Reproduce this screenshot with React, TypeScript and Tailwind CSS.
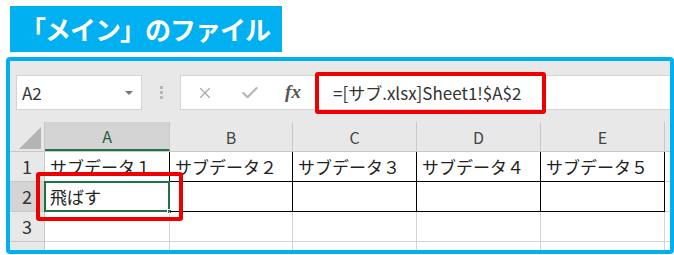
import { X, Check } from 'lucide-react'

const cols = ['A', 'B', 'C', 'D', 'E']
const widths = ['w-[125px]', 'w-[123px]', 'w-[124px]', 'w-[124px]', 'w-[124px]']
const jp = "font-['Noto_Sans_CJK_JP',sans-serif]"

export default function App() {
  return (
    <div className={`relative w-[674px] h-[255px] bg-white overflow-hidden ${jp}`}>
      {/* Title */}
      <div className="ml-[10px] mt-[6px] w-[272px] h-[46px] bg-[#00b0f0] flex items-center pl-[10px]">
        <span className="text-white text-[26px] font-bold leading-none tracking-[-1px]">「メイン」のファイル</span>
      </div>

      {/* Excel frame */}
      <div className="ml-[6px] mt-[5px] w-[668px] h-[197px] border-4 border-[#00b0f0] rounded-[4px] overflow-hidden bg-[#e8e8e8]">
        {/* Formula bar */}
        <div className="h-[61px] flex items-start pt-[14px] pl-[6px]">
          <div className="w-[126px] h-[35px] bg-white border border-[#d4d4d4] flex items-center justify-between pl-[5px] pr-[8px]">
            <span className="text-[17px] text-[#333]">A2</span>
            <span className="w-0 h-0 border-l-[4px] border-r-[4px] border-t-[4px] border-l-transparent border-r-transparent border-t-[#777]" />
          </div>
          <div className="w-[38px] h-[35px] flex flex-col items-center justify-center gap-[2px]">
            <span className="w-[3px] h-[3px] bg-[#b8b8b8]" />
            <span className="w-[3px] h-[3px] bg-[#b8b8b8]" />
            <span className="w-[3px] h-[3px] bg-[#b8b8b8]" />
          </div>
          <div className="flex-1 h-[35px] bg-white border border-r-0 border-[#d4d4d4] flex items-center">
            <div className="w-[46px] flex justify-center ml-[1px]">
              <X size={18} strokeWidth={1.5} color="#a6a6a6" />
            </div>
            <div className="w-[44px] flex justify-center">
              <Check size={20} strokeWidth={2.5} color="#b4b4b4" />
            </div>
            <div className="w-[42px] flex justify-center">
              <span className="font-['Liberation_Serif',serif] italic font-bold text-[19px] text-[#555]">fx</span>
            </div>
            <span className="ml-[19px] text-[17px] text-[#333]">=[サブ.xlsx]Sheet1!$A$2</span>
          </div>
        </div>

        {/* Column headers */}
        <div className="flex h-[30px] border-b border-[#c8c8c8]">
          <div className="w-[35px] h-full border-r border-[#c8c8c8] flex items-end justify-end pr-[3px] pb-[2px]">
            <span className="w-0 h-0 border-l-[22px] border-l-transparent border-b-[22px] border-b-[#b4b4b4]" />
          </div>
          {cols.map((c, i) => (
            <div
              key={c}
              className={`${widths[i]} h-full flex items-center justify-center text-[16px] border-r border-[#c8c8c8] ${i === 0 ? 'bg-[#d4d4d4] border-b-2 border-b-[#217346] text-[#2a5a3e]' : 'text-[#444]'}`}
            >
              {c}
            </div>
          ))}
          <div className="flex-1" />
        </div>

        {/* Rows */}
        {[1, 2, 3, 4].map((r) => (
          <div key={r} className="flex h-[30px] bg-white">
            <div className={`w-[35px] h-full flex items-center justify-center text-[18px] text-[#333] border-r border-b border-[#c8c8c8] ${r === 2 ? 'bg-[#d4d4d4]' : 'bg-[#e8e8e8]'}`}>
              {r < 4 ? r : ''}
            </div>
            {cols.map((c, i) => {
              const boxed = r <= 2
              const selected = r === 2 && i === 0
              return (
                <div
                  key={c}
                  className={`${widths[i]} h-full relative flex items-center pl-[5px] text-[17px] text-[#222] ${boxed ? 'border-r border-b border-black' : 'border-r border-b border-[#d4d4d4]'}`}
                >
                  {r === 1 ? `サブデータ${'１２３４５'[i]}` : selected ? '飛ばす' : ''}
                  {selected && (
                    <>
                      <span className="absolute -left-[1px] -top-[1px] -right-[1px] -bottom-[1px] border-2 border-[#217346]" />
                      <span className="absolute -right-[3px] -bottom-[3px] w-[5px] h-[5px] bg-[#217346] border border-white" />
                    </>
                  )}
                </div>
              )
            })}
            <div className="flex-1 border-b border-[#d4d4d4]" />
          </div>
        ))}
      </div>

      {/* Red highlight boxes */}
      <div className="absolute left-[315px] top-[72px] w-[231px] h-[42px] border-4 border-[#ee0000] rounded-[3px]" />
      <div className="absolute left-[36px] top-[172px] w-[147px] h-[49px] border-4 border-[#ee0000] rounded-[3px]" />
    </div>
  )
}
